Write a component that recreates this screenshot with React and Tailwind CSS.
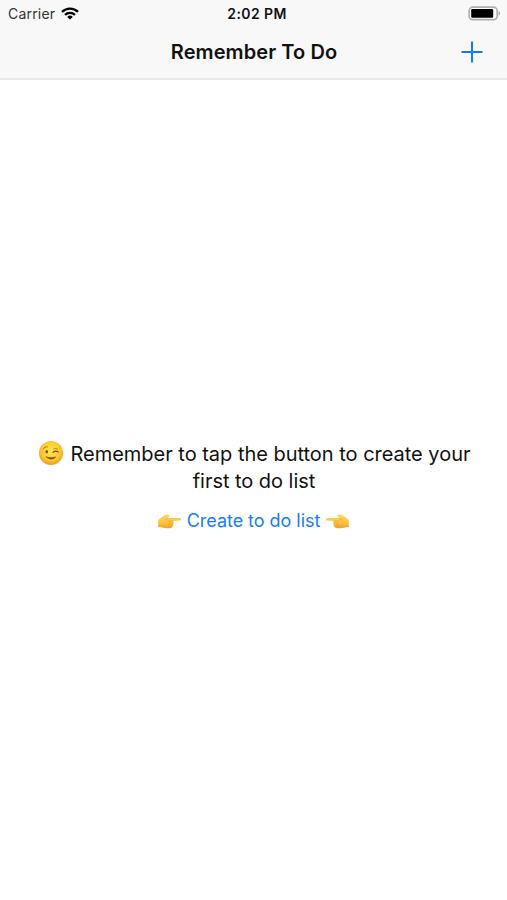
const fontStack = "font-['Inter','Liberation_Sans',sans-serif]"

function WifiIcon() {
  return (
    <svg className="mb-[2px] h-[13px] w-[18px]" viewBox="0 0 18 13" fill="none" stroke="#000" strokeWidth="2.3">
      <path d="M1 4.8a11.6 11.6 0 0 1 16 0" />
      <path d="M4 7.9a7.2 7.2 0 0 1 10 0" />
      <path d="M9 12.6 6.2 9.9a4 4 0 0 1 5.6 0Z" fill="#000" stroke="none" />
    </svg>
  )
}

function BatteryIcon() {
  return (
    <svg className="mb-[2px] h-[15px] w-[33px]" viewBox="0 0 33 15">
      <rect x="1.2" y="1.2" width="28" height="12.4" rx="3.6" fill="#fff" stroke="#b0b0b0" strokeWidth="1.7" />
      <rect x="3.2" y="3" width="22" height="8.8" rx="1.2" fill="#000" />
      <path d="M30.6 5.2c1.8.5 1.8 3.9 0 4.4Z" fill="#a3a3a3" />
    </svg>
  )
}

function PlusIcon() {
  return (
    <svg className="h-[22px] w-[22px]" viewBox="0 0 22 22" stroke="#0a7aff" strokeWidth="2">
      <path d="M11 .5v21M.5 11h21" />
    </svg>
  )
}

function WinkFace() {
  return (
    <svg className="mb-[3px] h-6 w-6 shrink-0" viewBox="0 0 24 24" fill="none" strokeLinecap="round">
      <defs>
        <radialGradient id="face" cx="0.5" cy="0.42" r="0.58">
          <stop offset="0" stopColor="#ffe552" />
          <stop offset="0.65" stopColor="#fecb32" />
          <stop offset="1" stopColor="#f0971c" />
        </radialGradient>
      </defs>
      <circle cx="12" cy="12" r="12" fill="url(#face)" />
      <ellipse cx="7.8" cy="10.8" rx="1.3" ry="1.7" fill="#7d4f10" />
      <path d="M4.3 7.8c.9-1.5 2.3-2.1 4-1.9" stroke="#a86b12" strokeWidth="0.9" />
      <path d="M14 11.3c1.4-1.4 3.4-1.6 5.3-.4" stroke="#7d4f10" strokeWidth="1.2" />
      <path d="M14.7 7.9c1.4-.7 2.8-.6 4 .3" stroke="#a86b12" strokeWidth="0.8" />
      <path d="M7.6 16c2.3 2.8 6.7 2.8 9 0-2.8 1-6.2 1-9 0Z" fill="#7d4f10" stroke="#7d4f10" strokeWidth="0.7" />
    </svg>
  )
}

function PointingHand({ className = '' }) {
  return (
    <svg className={`h-[15px] w-[23px] shrink-0 ${className}`} viewBox="0 0 23 15">
      <defs>
        <linearGradient id="hand" x1="0" y1="0" x2="0" y2="1">
          <stop offset="0" stopColor="#ffd65a" />
          <stop offset="0.6" stopColor="#fcc341" />
          <stop offset="1" stopColor="#eda02c" />
        </linearGradient>
      </defs>
      <path
        d="M.2 6C2.3 4.8 4.5 2.4 6.8 1.1c1.5-.8 3.8-.9 4.5-.1.6.8-.3 1.8-1.5 2.4l-.5.5h12.2c2 0 2 2.7 0 2.7l-6.5.4c1.3.7 1.1 2.2.1 2.6.8.8.4 2-.5 2.3.1 1.2-.7 2-1.8 2.1-3.3.3-6.4.4-8.4-.4-1.4-.6-2.8-.7-4.2-.6Z"
        fill="url(#hand)"
      />
      <path d="M9.3 4.1 7.8 6M10.5 7.1H15M10.7 9.6h4M10.5 11.8H14" fill="none" stroke="#e39a2c" strokeWidth="0.6" strokeLinecap="round" />
    </svg>
  )
}

function StatusBar() {
  return (
    <div className="grid h-7 grid-cols-3 items-center pl-2 pr-[6px]">
      <div className="flex items-center gap-[6px] text-[14px] leading-7 tracking-[0.2px] text-[#333]">
        <span>Carrier</span>
        <WifiIcon />
      </div>
      <div className="pl-[5px] text-center text-[14px] font-semibold leading-7 tracking-[0.4px] text-[#111]">2:02 PM</div>
      <div className="flex justify-end">
        <BatteryIcon />
      </div>
    </div>
  )
}

export default function App() {
  return (
    <div className={`flex h-[900px] w-[507px] flex-col bg-white text-[#111] ${fontStack}`}>
      <header className="h-20 border-b-2 border-[#e9e9e9] bg-[#f8f8f8]">
        <StatusBar />
        <div className="grid h-12 grid-cols-[60px_1fr_60px] items-center">
          <span />
          <h1 className="pl-px text-center text-[20px] font-semibold tracking-[0.08px]">Remember To Do</h1>
          <button className="flex justify-end pr-6" aria-label="Add list">
            <PlusIcon />
          </button>
        </div>
      </header>

      <main className="flex flex-col items-center pl-[2px] pt-[361px]">
        <div className="flex h-[27px] items-center whitespace-nowrap text-[20px] leading-[27px]">
          <WinkFace />
          <span className="pl-2 tracking-[-0.02px]">Remember to tap the button to create your</span>
        </div>
        <p className="pr-px text-[20px] leading-[27px] tracking-[-0.04px]">first to do list</p>
        <button className="mt-3 flex h-7 items-center gap-[6px] pr-[2px] text-[18px] leading-7 tracking-[-0.04px] text-[#147efb]">
          <PointingHand />
          <span>Create to do list</span>
          <PointingHand className="-scale-x-100" />
        </button>
      </main>
    </div>
  )
}
